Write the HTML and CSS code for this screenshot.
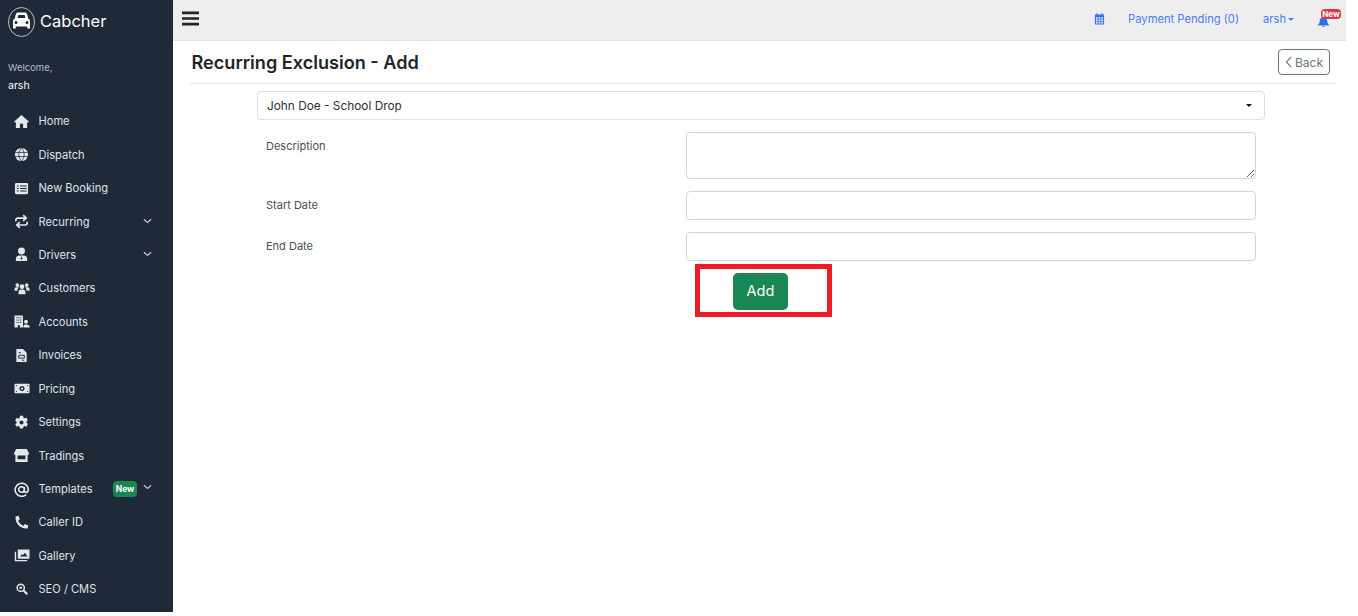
FILE: index.html
```html
<!DOCTYPE html>
<html lang="en">
<head>
<meta charset="utf-8">
<title>Recurring Exclusion - Add</title>
<link rel="stylesheet" href="styles.css">
</head>
<body>
<div class="app">
  <aside class="sidebar">
    <div class="brand">
      <svg class="logo" viewBox="0 0 27 30" preserveAspectRatio="none"><ellipse cx="13.500" cy="15" rx="13" ry="14.500" fill="none" stroke="#e5e7eb" stroke-width=".8"/><path fill="#fff" d="M10 5.500h7c1 0 1.800.6 2.100 1.500l1.100 4.400c1.200.6 1.800 1.500 1.800 2.700V21.500h-2.800v-2H7.800v2H5v-7.400c0-1.200.6-2.100 1.800-2.700L7.900 7c.3-.9 1.100-1.500 2.100-1.500zm.4 2.600-.9 3h8l-.9-3zM8 14a1.500 1.500 0 1 0 0 3 1.500 1.500 0 0 0 0-3zm11 0a1.500 1.500 0 1 0 0 3 1.500 1.500 0 0 0 0-3z"/></svg>
      <span class="brand-name">Cabcher</span>
    </div>
    <div class="welcome">Welcome,</div>
    <div class="username">arsh</div>
    <nav class="menu">
      <a class="item"><svg class="ico" viewBox="0 0 16 16"><path d="M8 1 0 8.200l.9 1L2 8.300V15h4.300v-4.500h3.400V15H14V8.300l1.100.9.900-1z"/></svg><span>Home</span></a>
      <a class="item"><svg class="ico" viewBox="0 0 16 16"><circle cx="8" cy="8" r="7"/><path d="M1 5.800h14M1 10.200h14M8 1c-3.800 4.300-3.800 9.700 0 14M8 1c3.800 4.300 3.800 9.700 0 14" fill="none" stroke="#1f2937" stroke-width=".8"/></svg><span>Dispatch</span></a>
      <a class="item"><svg class="ico" viewBox="0 0 16 16"><rect x="1" y="2" width="14" height="12" rx="1.500"/><path d="M3 5.300h2M6.500 5.300h7M3 8h2M6.500 8h7M3 10.700h2M6.500 10.700h7" stroke="#1f2937" stroke-width="1.200"/></svg><span>New Booking</span></a>
      <a class="item"><svg class="ico" viewBox="0 0 16 16"><path d="M2 7.800V6.300c0-1.100.9-2 2-2h8M9.800 1.300l3.200 3-3.200 3M14 8.200v1.500c0 1.100-.9 2-2 2H4M6.200 8.700l-3.200 3 3.200 3" fill="none" stroke="#e5e7eb" stroke-width="1.800"/></svg><span>Recurring</span><svg class="chev" viewBox="0 0 10 6"><path d="M1 1l4 3.600L9 1" /></svg></a>
      <a class="item"><svg class="ico" viewBox="0 0 16 16"><circle cx="8" cy="4.200" r="3.700"/><path d="M2 15v-2.500c0-2 1.500-3.500 3.500-3.500h5c2 0 3.500 1.500 3.500 3.500V15z"/><path d="M8 9.500 7.200 12 8 14l.8-2z" fill="#1f2937"/></svg><span>Drivers</span><svg class="chev" viewBox="0 0 10 6"><path d="M1 1l4 3.600L9 1"/></svg></a>
      <a class="item"><svg class="ico ico-wide" viewBox="0 0 16 16"><circle cx="8" cy="6" r="2.500"/><circle cx="3" cy="4.300" r="2"/><circle cx="13" cy="4.300" r="2"/><path d="M4.300 14v-2c0-1.800 1.100-2.900 2.700-2.900h2c1.600 0 2.700 1.100 2.700 2.900v2zM0 10.500V8.500c0-1 .8-1.900 1.800-1.900h2.900c-1 .9-1.500 2.300-1.600 3.900zM16 10.500V8.500c0-1-.8-1.900-1.800-1.900h-2.900c1 .9 1.500 2.300 1.600 3.900z"/></svg><span>Customers</span></a>
      <a class="item"><svg class="ico ico-wide" viewBox="0 0 16 16"><path d="M0 1.500h9V14.500H5.800v-2.500H3.500v2.500H0z"/><path d="M2 4h1.200M4 4h1.200M6 4h1.200M2 6.500h1.200M4 6.500h1.200M6 6.500h1.200M2 9h1.200M4 9h1.200M6 9h1.200" stroke="#1f2937"/><circle cx="12.300" cy="8.300" r="2.100"/><path d="M9.500 14.500v-1.200c0-1.200.8-2.100 2-2.100h1.500c1.300 0 3 .9 3 2.100v1.200z"/></svg><span>Accounts</span></a>
      <a class="item"><svg class="ico" viewBox="0 0 16 16"><path d="M2.500 1h7L13.500 5v10h-11z"/><path d="M5 7.800h6v3H5zM5 5h2.500M8.500 13h2.500" fill="none" stroke="#1f2937"/></svg><span>Invoices</span></a>
      <a class="item"><svg class="ico ico-wide" viewBox="0 0 16 16"><rect y="3" width="16" height="10" rx=".8"/><circle cx="8" cy="8" r="2.700" fill="#1f2937"/><circle cx="8" cy="8" r="1.200"/><path d="M1.500 5h1.200M1.500 11h1.200M13.300 5h1.200M13.300 11h1.200" stroke="#1f2937"/></svg><span>Pricing</span></a>
      <a class="item"><svg class="ico" viewBox="0 0 16 16"><path fill-rule="evenodd" d="M6.400.7h3.200l.4 2 1.200.7 2-.6 1.600 2.700-1.500 1.400v1.400l1.500 1.400-1.600 2.700-2-.6-1.200.7-.4 2H6.400l-.4-2-1.200-.7-2 .6-1.600-2.700L2.700 8.700V7.300L1.200 5.900l1.600-2.700 2 .6 1.200-.7zM8 5.800a2.200 2.200 0 1 0 0 4.400 2.200 2.200 0 0 0 0-4.400z"/></svg><span>Settings</span></a>
      <a class="item"><svg class="ico" viewBox="0 0 16 16"><path fill-rule="evenodd" d="M2.300 1h11.400L16 5.500c0 1-.6 1.700-1.500 1.900V15h-13V7.400C.6 7.200 0 6.500 0 5.500zM3.800 8v4h8.400V8z"/></svg><span>Tradings</span></a>
      <a class="item"><svg class="ico" viewBox="0 0 16 16"><path d="M12.900 13.500A7 7 0 1 1 15.200 8c0 1.800-.8 3.100-2.300 3.100-1.200 0-1.900-.8-1.900-2V5M11 8a3 3 0 1 1-6 0 3 3 0 0 1 6 0z" fill="none" stroke="#e5e7eb" stroke-width="1.700"/></svg><span>Templates</span><b class="badge">New</b><svg class="chev chev-badge" viewBox="0 0 10 6"><path d="M1 1l4 3.600L9 1"/></svg></a>
      <a class="item"><svg class="ico" viewBox="0 0 16 16"><path d="M4.800.8 1.700 1.600C1 9 7 15 14.400 14.300l.8-3.100-3.800-1.600-1.600 2C7.900 10.700 5.300 8 4.300 6l2-1.600z"/></svg><span>Caller ID</span></a>
      <a class="item"><svg class="ico ico-wide" viewBox="0 0 16 16"><path fill-rule="evenodd" d="M3.500 1.500H16v10H3.500zM6 9h8l-3-4-2 2.700-1-1z"/><circle cx="6.200" cy="4" r="1"/><path d="M1 4v9.500h12.500" fill="none" stroke="#e5e7eb" stroke-width="1.500"/></svg><span>Gallery</span></a>
      <a class="item"><svg class="ico ico-small" viewBox="0 0 16 16"><circle cx="6.300" cy="6.300" r="4.800" fill="none" stroke="#e5e7eb" stroke-width="2"/><path d="M10 10l5 5" fill="none" stroke="#e5e7eb" stroke-width="2.800"/><circle cx="6.300" cy="6.300" r="1.800"/></svg><span>SEO / CMS</span></a>
    </nav>
  </aside>
  <div class="main">
    <header class="topbar">
      <svg class="burger" viewBox="0 0 18 15"><path d="M0 1.500h18M0 7.500h18M0 13.500h18" stroke="#212529" stroke-width="2.900"/></svg>
      <div class="top-right">
        <svg class="cal" viewBox="0 0 12 12"><path fill-rule="evenodd" d="M2.500 0h1.500v1.200h4V0h1.500v1.200H11V12H1V1.200h1.500zM2.200 4v1.700h1.900V4zm2.900 0v1.700h1.800V4zm2.800 0v1.700h1.900V4zM2.200 6.600v1.600h1.900V6.600zm2.900 0v1.600h1.800V6.600zm2.800 0v1.600h1.900V6.600zM2.200 9.100v1.700h1.900V9.100zm2.900 0v1.700h1.800V9.100zm2.800 0v1.700h1.900V9.100z"/></svg>
        <a class="top-link pending">Payment Pending (0)</a>
        <a class="top-link user">arsh<i class="caret-blue"></i></a>
        <span class="bell-wrap">
          <svg class="bell" viewBox="0 0 12 12"><path d="M6 0a1 1 0 0 1 1 1v.4A3.800 3.800 0 0 1 10 5c0 2.500.8 3.400 1.800 4.300V10.300H.2V9.300C1.200 8.400 2 7.500 2 5a3.800 3.800 0 0 1 3-3.600V1a1 1 0 0 1 1-1zM4.500 10.800h3A1.500 1.500 0 0 1 6 12a1.500 1.500 0 0 1-1.500-1.200z"/></svg>
          <b class="bell-badge">New</b>
        </span>
      </div>
    </header>
    <section class="content">
      <div class="page-head">
        <h1>Recurring Exclusion - Add</h1>
        <a class="back"><svg class="back-ico" viewBox="0 0 8 14"><path d="M7 1 1.500 7 7 13"/></svg>Back</a>
      </div>
      <form class="form">
        <div class="select"><span>John Doe - School Drop</span><i class="caret-dark"></i></div>
        <div class="fields">
          <div class="row row-area"><label>Description</label><div class="ctl"><textarea class="input area"></textarea></div></div>
          <div class="row"><label>Start Date</label><div class="ctl"><input class="input" type="text"></div></div>
          <div class="row"><label>End Date</label><div class="ctl"><input class="input" type="text"></div></div>
        </div>
        <div class="actions"><div class="highlight"><button class="add" type="button">Add</button></div></div>
      </form>
    </section>
  </div>
</div>
</body>
</html>
```
FILE: styles.css
```css
* { box-sizing: border-box; }
html, body { margin: 0; padding: 0; height: 100%; background: #fff; overflow: hidden; }
body { font-family: Inter, "Liberation Sans", sans-serif; color: #212529; }
.app { display: flex; width: 1346px; height: 612px; }

.sidebar { width: 173px; flex: none; background: #1f2937; color: #e5e7eb; overflow: hidden; }
.brand { display: flex; align-items: flex-start; gap: 5px; height: 42px; padding: 7px 0 0 8px; }
.logo { width: 27px; height: 30px; }
.brand-name { color: #fff; font-size: 16.500px; line-height: 28px; }
.welcome { margin: 19px 0 0 8px; font-size: 9.500px; line-height: 14px; color: #b5bcc6; }
.username { margin: 4px 0 0 8px; font-size: 10.500px; line-height: 14px; color: #fff; }
.menu { display: flex; flex-direction: column; margin-top: 11.500px; }
.item { display: flex; align-items: center; height: 33.450px; padding-left: 14px; font-size: 11.100px; color: #dfe3e8; position: relative; }
.ico { width: 15px; height: 15px; margin-right: 9.500px; fill: #e5e7eb; flex: none; }
.ico-wide { width: 16px; margin-right: 8.500px; }
.ico-small { width: 12px; height: 12px; margin: 0 10.500px 0 2px; }
.chev { position: absolute; left: 143px; top: 13px; width: 9px; height: 6px; fill: none; stroke: #c5cad1; stroke-width: 1.300; }
.chev-badge { top: 12px; }
.badge { position: absolute; left: 113px; top: 9px; width: 24px; height: 16px; line-height: 16px; text-align: center; background: #198754; border-radius: 4px; font-size: 8.500px; font-weight: 700; color: #fff; }

.main { flex: 1; display: flex; flex-direction: column; min-width: 0; }
.topbar { height: 41px; flex: none; display: flex; align-items: center; justify-content: space-between; background: #eeeeee; border-bottom: 1px solid #dee2e6; padding: 0 17px 2px 9px; }
.burger { width: 17px; height: 15px; margin-top: -1px; }
.top-right { display: flex; align-items: center; }
.cal { width: 11px; height: 12px; fill: #3b71f0; margin-right: 23px; }
.top-link { color: #4a7df5; font-size: 11.200px; line-height: 14px; }
.pending { margin-right: 24px; }
.user { display: flex; align-items: center; margin-right: 24px; }
.caret-blue { width: 0; height: 0; margin-left: 2px; border: 3px solid transparent; border-top-color: #4a7df5; border-bottom: 0; }
.bell-wrap { position: relative; display: block; width: 11px; height: 11px; margin-top: 4px; }
.bell { display: block; width: 11px; height: 11px; fill: #2f6df6; }
.bell-badge { position: absolute; left: 3px; top: -7px; width: 20px; height: 10px; line-height: 10px; text-align: center; background: #dc3545; border-radius: 4px; font-size: 8px; font-weight: 700; color: #fff; }

.content { flex: 1; padding: 0 11px 0 16px; }
.page-head { display: flex; align-items: center; justify-content: space-between; height: 43px; margin-left: 1px; padding: 0 5px 0 1.500px; border-bottom: 1px solid #e6e8ea; }
h1 { margin: 0; font-size: 18.100px; line-height: 24px; font-weight: 600; color: #212529; }
.back { display: flex; align-items: center; justify-content: center; gap: 3px; width: 52px; height: 26px; border: 1px solid #6c757d; border-radius: 4px; font-size: 12px; color: #6c757d; }
.back-ico { width: 7px; height: 12px; fill: none; stroke: #6c757d; stroke-width: 1.300; }

.form { width: 1008px; margin: 7px 0 0 68px; }
.select { display: flex; align-items: center; justify-content: space-between; height: 29px; padding: 0 12px 0 9px; border: 1px solid #dcdfe4; border-radius: 4px; font-size: 11.850px; color: #2b3035; }
.caret-dark { width: 0; height: 0; border: 3px solid transparent; border-top-color: #111; border-bottom: 0; }
.fields { display: flex; flex-direction: column; gap: 12px; margin-top: 12px; padding: 0 9px; }
.row { display: flex; height: 29px; }
.row-area { height: 47px; }
.row label { width: 420px; flex: none; font-size: 11px; line-height: 14px; padding-top: 7px; color: #495057; }
.ctl { flex: 1; }
.input { display: block; width: 100%; height: 100%; border: 1px solid #d1d3da; border-radius: 4px; background: #fff; margin: 0; padding: 4px 8px; font: inherit; }
.area { resize: vertical; }
.actions { display: flex; margin-top: 3px; padding-left: 438px; }
.highlight { width: 137px; height: 53px; padding: 4px 0 0 33px; border: 5px solid #ed1c24; }
.add { display: block; width: 55px; height: 37px; padding: 0 0 2px; border: 0; border-radius: 5px; background: #198754; color: #fff; font: 400 14.500px Inter, sans-serif; }
```
